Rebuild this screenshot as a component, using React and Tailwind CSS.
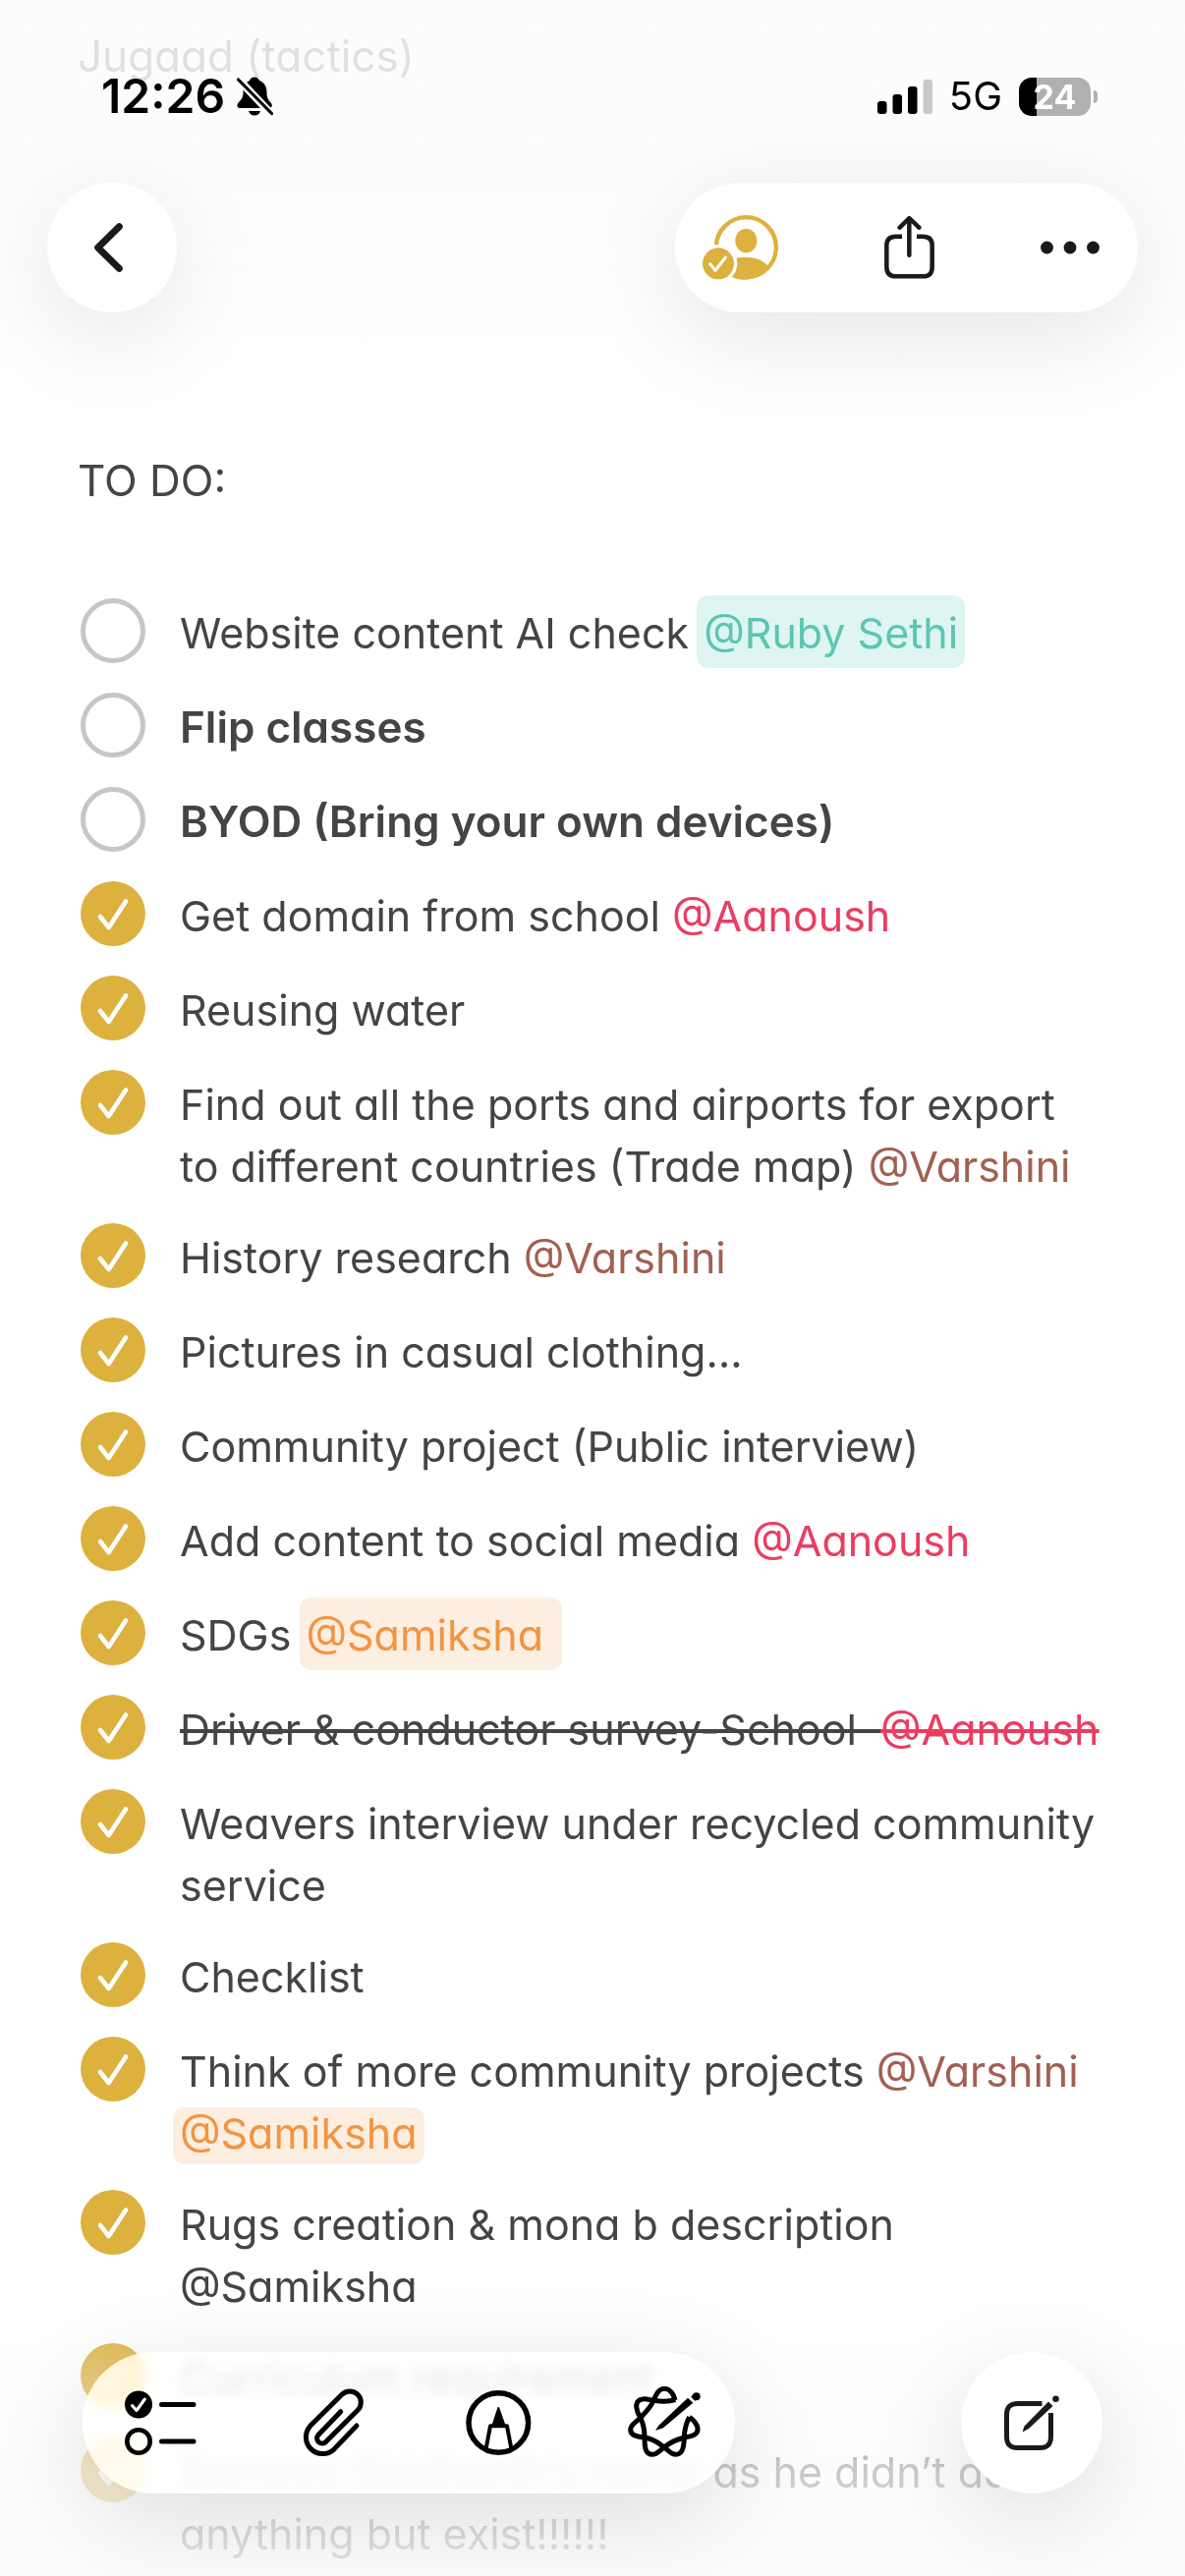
import { useState } from 'react';

const todos = [
    { text: 'Website content AI check ', tag: '@Ruby Sethi', tone: 'ruby', done: false },
    { text: 'Flip classes', bold: true, done: false },
    { text: 'BYOD (Bring your own devices)', bold: true, done: false },
    { text: 'Get domain from school ', tag: '@Aanoush', tone: 'aanoush', done: true },
    { text: 'Reusing water', done: true },
    { text: 'Find out all the ports and airports for export\nto different countries (Trade map) ', tag: '@Varshini', tone: 'varshini', done: true },
    { text: 'History research ', tag: '@Varshini', tone: 'varshini', done: true },
    { text: 'Pictures in casual clothing…', done: true },
    { text: 'Community project (Public interview)', done: true },
    { text: 'Add content to social media ', tag: '@Aanoush', tone: 'aanoush', done: true },
    { text: 'SDGs ', tag: '@Samiksha ', tone: 'samiksha', done: true },
    { text: 'Driver & conductor survey-School  ', tag: '@Aanoush', tone: 'aanoush', strike: true, done: true },
    { text: 'Weavers interview under recycled community service', done: true },
    { text: 'Checklist', done: true },
    { text: 'Think of more community projects ', tag: '@Varshini', tone: 'varshini', tag2: '@Samiksha', tone2: 'samikshaLine', done: true },
    { text: 'Rugs creation & mona b description @Samiksha', done: true },
    { text: 'Curriculum requirement', done: true },
    { text: 'Remove Siddharth’s name as he didn’t add anything but exist!!!!!!', done: true },
];

const tones = {
    ruby: 'text-[#5bc6b2] bg-[#dff5f2] rounded-xl px-[7px] pt-3 pb-[10px] -ml-1',
    aanoush: 'text-[#ea3d62]',
    varshini: 'text-[#a26052]',
    samiksha: 'text-[#f3943f] bg-[#fceee1] rounded-xl px-[7px] pt-3 pb-[10px] -ml-1',
    samikshaLine: 'text-[#f3943f] bg-[#fceee1] rounded-xl px-[7px] pb-[6px] -ml-[7px]',
};

function TodoItem({ item, id }) {
    const [done, setDone] = useState(item.done);

    return (
        <li className="flex items-start gap-[35px] min-h-[70px] mb-[26px]">
            <span className="relative shrink-0 size-[66px]">
                <input
                    id={id}
                    type="checkbox"
                    checked={done}
                    onChange={() => setDone(!done)}
                    className="block appearance-none size-[66px] rounded-full border-5 border-[#c6c6c8] checked:border-0 checked:bg-[#ddb13d]"
                />
                {done && (
                    <svg viewBox="0 0 66 66" className="absolute inset-0 size-[66px] pointer-events-none" fill="none" stroke="white" strokeWidth="4.6" strokeLinecap="round" strokeLinejoin="round">
                        <path d="M20 36 L28.7 47 L46 20.5" />
                    </svg>
                )}
            </span>
            <label htmlFor={id} className={`pt-1 whitespace-pre-wrap ${item.bold ? 'text-[44px] font-semibold' : ''} ${item.strike ? 'line-through' : ''}`}>
                {item.text}
                {item.tag && <span className={`${tones[item.tone]} ${item.strike ? 'line-through' : ''}`}>{item.tag}</span>}
                {item.tag2 && <><br /><span className={tones[item.tone2]}>{item.tag2}</span></>}
            </label>
        </li>
    );
}

function StatusBar() {
    return (
        <div className="flex items-center justify-between h-[186px] pl-[103px] pr-[89px] pt-[10px] text-black">
            <div className="flex items-center gap-3">
                <span className="text-[48px] leading-[60px] font-semibold">12:26</span>
                <svg width="37" height="40" viewBox="0 0 37 40" aria-label="Silent mode">
                    <path d="M18 .5C15 .5 13.5 2.500 13 4C8 6.500 6.500 11 6.500 16C6.500 22 4 23.500 1 27.500C-.5 30 1 32 3 32H33C36 32 36.500 29 35 27C32 23.500 30.500 22 30.500 16C30.500 10 28 6 23 4C22 2 20.500 .5 18 .5Z" />
                    <path d="M12 35H24C23 38 21 39.500 18 39.500S13 38 12 35Z" />
                    <path d="M0 1L37 40" stroke="#fcfcfc" strokeWidth="8" />
                    <path d="M1.500 3L35.500 37.500" stroke="black" strokeWidth="3.200" strokeLinecap="round" />
                </svg>
            </div>
            <div className="flex items-center gap-[17px]">
                <svg width="56" height="35" viewBox="0 0 56 35" aria-label="Signal">
                    <rect x="0" y="22" width="9.500" height="13" rx="3" />
                    <rect x="15.500" y="15" width="9.500" height="20" rx="3" />
                    <rect x="31" y="7" width="9.500" height="28" rx="3" />
                    <rect x="46.500" y="0" width="9.500" height="35" rx="3" fill="#c8c8c8" />
                </svg>
                <span className="text-[40px] leading-[48px]">5G</span>
                <div className="flex items-center gap-[3px]">
                    <div className="flex items-center justify-center w-[73px] h-[39px] rounded-[13px] bg-linear-to-r from-black from-24% to-[#b0b0b0] to-24% text-white text-[34px] leading-[39px] font-bold">24</div>
                    <div className="w-1 h-[13px] rounded-r-full bg-[#b0b0b0]" />
                </div>
            </div>
        </div>
    );
}

function Header() {
    return (
        <header className="fixed inset-x-0 top-0 z-10 pb-[80px] bg-linear-to-b from-[#fcfcfc]/85 via-[#fcfcfc]/85 to-transparent">
            <StatusBar />
            <div className="flex items-center justify-between px-12">
                <button aria-label="Back" className="flex items-center justify-center size-[132px] pr-2 rounded-full bg-white shadow-[0_24px_100px_rgba(0,0,0,0.1)]">
                    <svg width="29" height="50" viewBox="0 0 29 50" fill="none" stroke="#1a1a1a" strokeWidth="7" strokeLinecap="round" strokeLinejoin="round">
                        <path d="M25.300 3.700L3.700 25L25.300 46.300" />
                    </svg>
                </button>
                <div className="flex items-center gap-[108px] h-[132px] pl-7 pr-[39px] rounded-full bg-white shadow-[0_24px_100px_rgba(0,0,0,0.1)]">
                    <button aria-label="Collaborators">
                        <svg width="77" height="66" viewBox="47 150 231 198" fill="#ddb13d">
                            <circle cx="180" cy="248" r="91.500" fill="none" stroke="#ddb13d" strokeWidth="13" />
                            <ellipse cx="180" cy="228" rx="33" ry="37" />
                            <path d="M110 305C135 268 220 272 244 303L250 306A92 92 0 0 1 120 330Z" />
                            <circle cx="95" cy="298" r="58" fill="white" />
                            <circle cx="95" cy="298" r="48" />
                            <path d="M70 299L86 319L117 279" fill="none" stroke="white" strokeWidth="9" strokeLinecap="round" strokeLinejoin="round" />
                        </svg>
                    </button>
                    <button aria-label="Share">
                        <svg width="51" height="64" viewBox="600 145 153 192" fill="none" stroke="#1a1a1a" strokeWidth="13.500" strokeLinejoin="round">
                            <path d="M654 207H636C615 207 607 217 607 234V300C607 320 617 329 636 329H717C737 329 746 320 746 300V234C746 217 737 207 717 207H699" />
                            <path d="M676 264V153M647 180L676 151L706 180" strokeLinecap="round" />
                        </svg>
                    </button>
                    <button aria-label="More">
                        <svg width="60" height="14" viewBox="0 0 60 14" fill="#1a1a1a">
                            <circle cx="6.500" cy="7" r="6.400" />
                            <circle cx="30" cy="7" r="6.400" />
                            <circle cx="53.500" cy="7" r="6.400" />
                        </svg>
                    </button>
                </div>
            </div>
        </header>
    );
}

function BottomBar() {
    return (
        <footer className="fixed inset-x-0 bottom-0 z-10 flex items-center justify-between px-[84px] pt-[94px] pb-[84px] bg-linear-to-b from-[#fbfbfb]/0 from-15% via-[#fbfbfb]/72 via-65% to-[#fbfbfb]/88">
            <div className="flex items-center gap-[98px] h-[144px] pl-[43px] pr-[35px] rounded-full bg-white/80 backdrop-blur-[6px] backdrop-saturate-200 shadow-[0_24px_100px_rgba(0,0,0,0.12)]">
                <button aria-label="Checklist">
                    <svg width="80" height="68" viewBox="0 0 80 68" fill="none" stroke="black" strokeLinecap="round" strokeLinejoin="round">
                        <circle cx="14" cy="15.500" r="14" fill="black" stroke="none" />
                        <path d="M7.500 16.500L12 21.500L20.300 10" stroke="white" strokeWidth="3" />
                        <circle cx="14" cy="53" r="11.700" strokeWidth="4.600" />
                        <path d="M37.500 15.500H70M37.500 53H70" strokeWidth="5" />
                    </svg>
                </button>
                <button aria-label="Attach">
                    <svg width="68" height="72" viewBox="0 0 68 72" fill="none" stroke="black" strokeWidth="5" strokeLinecap="round">
                        <path d="M58 39L34.700 63.300A17 17 0 0 1 10.700 39.300L43 7.300A11.300 11.300 0 0 1 59 23.300L26 56A5.200 5.200 0 0 1 18.700 48.700L41.700 24.700" />
                    </svg>
                </button>
                <button aria-label="Markup">
                    <svg width="70" height="68" viewBox="0 0 70 68" fill="none" stroke="black" strokeLinejoin="round">
                        <circle cx="36.300" cy="34" r="30.300" strokeWidth="5.500" />
                        <path d="M36.300 19L30 38H43Z" fill="black" strokeWidth="2" />
                        <path d="M23.700 60L28 37.300H45L49.300 60" strokeWidth="4" />
                    </svg>
                </button>
                <button aria-label="Writing tools">
                    <svg width="74" height="74" viewBox="717 144 222 222" fill="none" stroke="black" strokeWidth="15" strokeLinejoin="round">
                        <path d="M861 186C855 161 841 151 828 151C810 151 803 170 795 188C786 210 768 226 755 240C740 255 725 262 725 275C725 295 745 297 768 300C800 305 812 319 828 330C845 343 850 352 863 352C884 352 888 330 889 300C890 270 897 252 905 238" />
                        <path d="M862 185C840 192 820 191 795 187C775 182 765 179 752 186C738 195 742 217 754 238C766 260 768 280 768 300C768 330 770 352 792 352C805 352 812 342 828 330C845 316 865 306 890 300C915 296 932 290 930 272C928 256 915 245 905 238" />
                        <path d="M801 279L811 263L900 179L916 194L825 271ZM910 176L917 168L930 182L922 188Z" fill="black" stroke="none" />
                        <circle cx="926" cy="175" r="12" fill="black" stroke="none" />
                    </svg>
                </button>
            </div>
            <button aria-label="New note" className="flex items-center justify-center size-[144px] rounded-full bg-white shadow-[0_24px_100px_rgba(0,0,0,0.12)]">
                <svg width="56" height="56" viewBox="0 0 56 56" fill="none" stroke="#1a1a1a" strokeWidth="5">
                    <path d="M38.500 8.500H14C6 8.500 2.500 12 2.500 20V42C2.500 50 6 53.500 14 53.500H36C44 53.500 47.500 50 47.500 42V18" />
                    <path d="M18.500 37.500L20.500 31.500L45 6.500L49.500 11L25 34Z" fill="#1a1a1a" stroke="none" />
                    <circle cx="52.500" cy="3.700" r="3.300" fill="#1a1a1a" stroke="none" />
                </svg>
            </button>
        </footer>
    );
}

export default function App() {
    return (
        <div className="relative min-h-screen overflow-hidden bg-white font-[Inter,'Noto_Sans',sans-serif] [font-feature-settings:'cv11']">
            <Header />
            <main className="pt-[26px] pl-[79px] pr-[70px] text-[43px] leading-[63px] text-[#444444]">
                <p className="text-[44px]">Jugaad (tactics)</p>
                <h1 className="mt-[369px] text-[44px] leading-[63px]">TO DO:</h1>
                <ul className="mt-[88px] pl-[3px]">
                    {todos.map((item, i) => (
                        <TodoItem key={i} item={item} id={`todo-${i}`} />
                    ))}
                </ul>
            </main>
            <BottomBar />
        </div>
    );
}
